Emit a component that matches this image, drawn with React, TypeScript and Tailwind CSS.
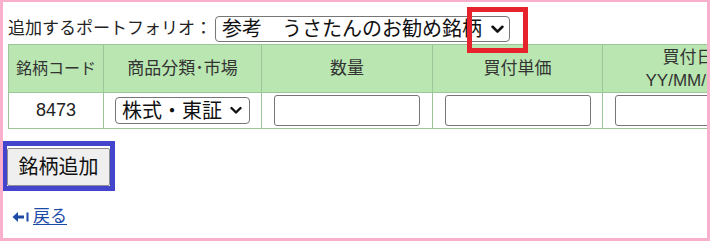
import React from "react";

const font = { fontFamily: '"Liberation Sans", "Noto Sans CJK JP", sans-serif' };

function Chevron({ className }: { className?: string }) {
  return (
    <svg viewBox="0 0 12 8" className={className} fill="none" stroke="#111" strokeWidth="2.4" strokeLinecap="round" strokeLinejoin="round">
      <path d="M1.5 1.5 L6 6 L10.5 1.5" />
    </svg>
  );
}

export default function App() {
  return (
    <div
      className="w-[710px] h-[241px] overflow-hidden bg-white border-solid border-[#f8b0cd] border-l-[3px] border-r-[3px] border-t-2 border-b-[3px]"
      style={font}
    >
      <div className="pl-[5px] pt-[14px]">
        {/* portfolio row */}
        <div className="flex items-center h-[26px]">
          <span className="w-[207px] text-[17px] leading-[22px] text-[#222] whitespace-nowrap">追加するポートフォリオ：</span>
          <div className="relative flex items-center w-[295px] h-[26px] border border-[#767676] rounded-[4px] bg-white pl-[6px]">
            <span className="text-[20px] leading-[22px] text-[#111] whitespace-nowrap">参考　うさたんのお勧め銘柄</span>
            <Chevron className="w-[13px] h-[9px] ml-[9px]" />
            <div className="absolute left-[251px] -top-[10px] w-[61px] h-[46px] border-[5px] border-[#e6222c]" />
          </div>
        </div>

        {/* table */}
        <table className="table-fixed border-collapse mt-[2px] w-[765px] text-[#333]">
          <colgroup>
            <col className="w-[95px]" />
            <col className="w-[158px]" />
            <col className="w-[171px]" />
            <col className="w-[170px]" />
            <col className="w-[171px]" />
          </colgroup>
          <thead>
            <tr className="h-[48px] bg-[#b9e6b1]">
              <th className="border border-[#9dc59a] font-normal text-[16px] leading-[23px] p-0 whitespace-nowrap">銘柄コード</th>
              <th className="border border-[#9dc59a] font-normal text-[17px] leading-[23px] p-0 whitespace-nowrap">商品分類･市場</th>
              <th className="border border-[#9dc59a] font-normal text-[17px] leading-[23px] p-0">数量</th>
              <th className="border border-[#9dc59a] font-normal text-[17px] leading-[23px] p-0">買付単価</th>
              <th className="border border-[#9dc59a] font-normal text-[17px] leading-[23px] p-0">
                <div>買付日</div>
                <div>YY/MM/DD</div>
              </th>
            </tr>
          </thead>
          <tbody>
            <tr className="h-[36px]">
              <td className="border border-[#9dc59a] text-center text-[18px] text-[#222] p-0">8473</td>
              <td className="border border-[#9dc59a] p-0">
                <div className="mx-auto flex items-center w-[135px] h-[27px] border border-[#767676] rounded-[4px] bg-white pl-[6px]">
                  <span className="text-[20px] leading-[22px] text-[#111] whitespace-nowrap">株式・東証</span>
                  <Chevron className="w-[12px] h-[9px] ml-[8px]" />
                </div>
              </td>
              <td className="border border-[#9dc59a] p-0">
                <div className="mx-auto w-[146px] h-[31px] border border-[#767676] rounded-[3px] bg-white" />
              </td>
              <td className="border border-[#9dc59a] p-0">
                <div className="mx-auto w-[146px] h-[31px] border border-[#767676] rounded-[3px] bg-white" />
              </td>
              <td className="border border-[#9dc59a] p-0">
                <div className="ml-[12px] w-[146px] h-[31px] border border-[#767676] rounded-[3px] bg-white" />
              </td>
            </tr>
          </tbody>
        </table>

        {/* button */}
        <div className="mt-[19px] -ml-px relative inline-flex">
          <div className="flex items-center justify-center w-[103px] h-[38px] bg-[#efefef] border border-[#8f8f8f] rounded-[2px] text-[20px] leading-[22px] text-[#111]">
            銘柄追加
          </div>
          <div className="absolute -left-[5px] -top-[7px] -right-[5px] -bottom-[5px] border-[5px] border-[#4444cc]" />
        </div>

        {/* back link */}
        <div className="mt-[20px] flex items-center h-[22px] pl-[4px] text-[#1d4aa6]">
          <svg viewBox="0 0 17 12" className="w-[17px] h-[12px]" fill="#1d4aa6">
            <path d="M0.5 6 L6 1 L6 4.5 L12 4.5 L12 7.5 L6 7.5 L6 11 Z" />
            <rect x="14.5" y="1.5" width="2" height="9" />
          </svg>
          <span className="ml-[4px] text-[17px] leading-[22px] underline underline-offset-2">戻る</span>
        </div>
      </div>
    </div>
  );
}
